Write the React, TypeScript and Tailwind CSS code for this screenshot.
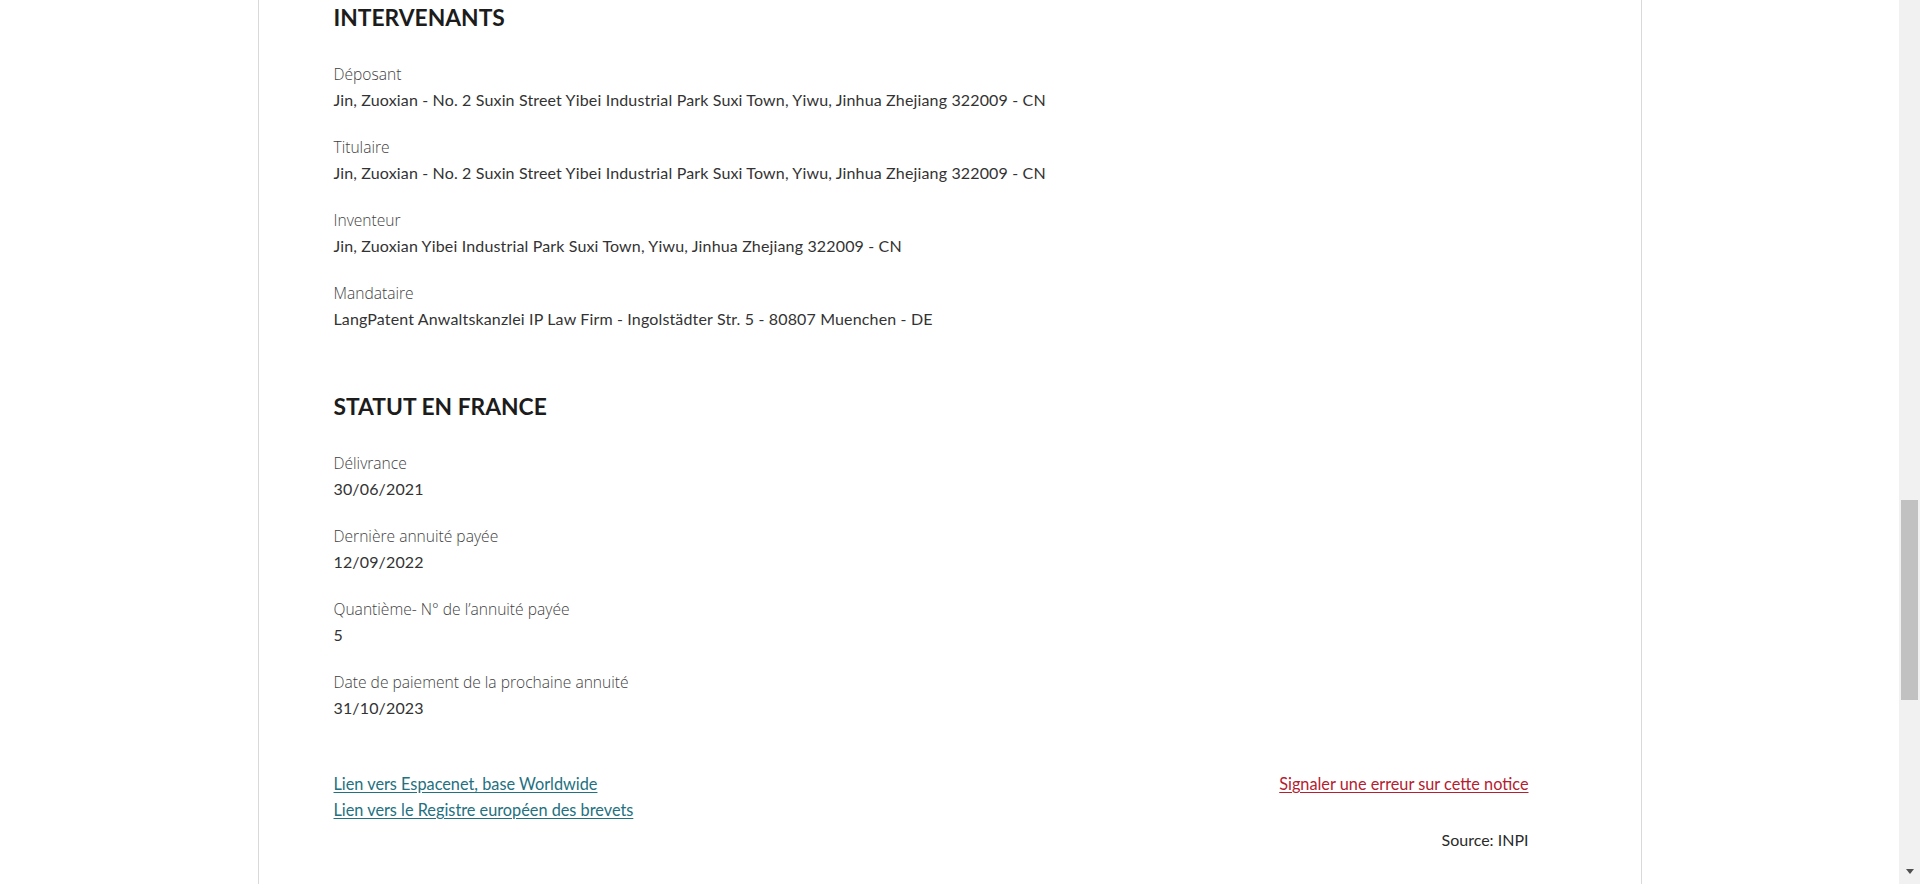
const intervenants = [
  {
    label: "Déposant",
    value:
      "Jin, Zuoxian - No. 2 Suxin Street Yibei Industrial Park Suxi Town, Yiwu, Jinhua Zhejiang 322009 - CN",
  },
  {
    label: "Titulaire",
    value:
      "Jin, Zuoxian - No. 2 Suxin Street Yibei Industrial Park Suxi Town, Yiwu, Jinhua Zhejiang 322009 - CN",
  },
  {
    label: "Inventeur",
    value: "Jin, Zuoxian Yibei Industrial Park Suxi Town, Yiwu, Jinhua Zhejiang 322009 - CN",
  },
  {
    label: "Mandataire",
    value: "LangPatent Anwaltskanzlei IP Law Firm - Ingolstädter Str. 5 - 80807 Muenchen - DE",
  },
];

const statut = [
  { label: "Délivrance", value: "30/06/2021" },
  { label: "Dernière annuité payée", value: "12/09/2022" },
  { label: "Quantième- N° de l’annuité payée", value: "5" },
  { label: "Date de paiement de la prochaine annuité", value: "31/10/2023" },
];

function Section(props: { title: string; fields: { label: string; value: string }[] }) {
  return (
    <section>
      <h2 className="text-[22.8px] font-bold leading-[32px] text-[#1c1c1c]">{props.title}</h2>
      <dl className="mt-[29px] flex flex-col gap-[22px]">
        {props.fields.map((f) => (
          <div key={f.label}>
            <dt className="font-['Open_Sans',sans-serif] text-[15.6px] font-light leading-[25px] text-[#3f3f3f]">
              {f.label}
            </dt>
            <dd className="text-[16px] leading-[26px] tracking-[0.15px] text-[#333]">{f.value}</dd>
          </div>
        ))}
      </dl>
    </section>
  );
}

export default function App() {
  return (
    <div className="flex h-[884px] overflow-hidden bg-white font-['Lato',_'Open_Sans',sans-serif]">
      <div className="flex flex-1 justify-center">
        <main className="w-[1384px] border-x border-[#d9d9d9] pl-[75px] pr-[112px] pt-px">
          <Section title="INTERVENANTS" fields={intervenants} />
          <div className="mt-[58px]">
            <Section title="STATUT EN FRANCE" fields={statut} />
          </div>
          <div className="mt-[50px] flex justify-between text-[16.3px] leading-[26px]">
            <div className="flex flex-col">
              <a href="#" className="text-[#23707f] underline underline-offset-2">
                Lien vers Espacenet, base Worldwide
              </a>
              <a href="#" className="text-[#23707f] underline underline-offset-2">
                Lien vers le Registre européen des brevets
              </a>
            </div>
            <a href="#" className="text-[#b4202f] underline underline-offset-2">
              Signaler une erreur sur cette notice
            </a>
          </div>
          <p className="mt-[4px] text-right text-[16px] leading-[26px] text-[#2a2a2a]">Source: INPI</p>
        </main>
      </div>
      <div className="flex w-[21px] flex-col items-center bg-[#f1f1f1]">
        <div className="mt-[500px] h-[200px] w-[17px] bg-[#c1c1c1]" />
        <div className="mb-[10px] mt-auto h-0 w-0 border-x-[4px] border-t-[5px] border-x-transparent border-t-[#505050]" />
      </div>
    </div>
  );
}
